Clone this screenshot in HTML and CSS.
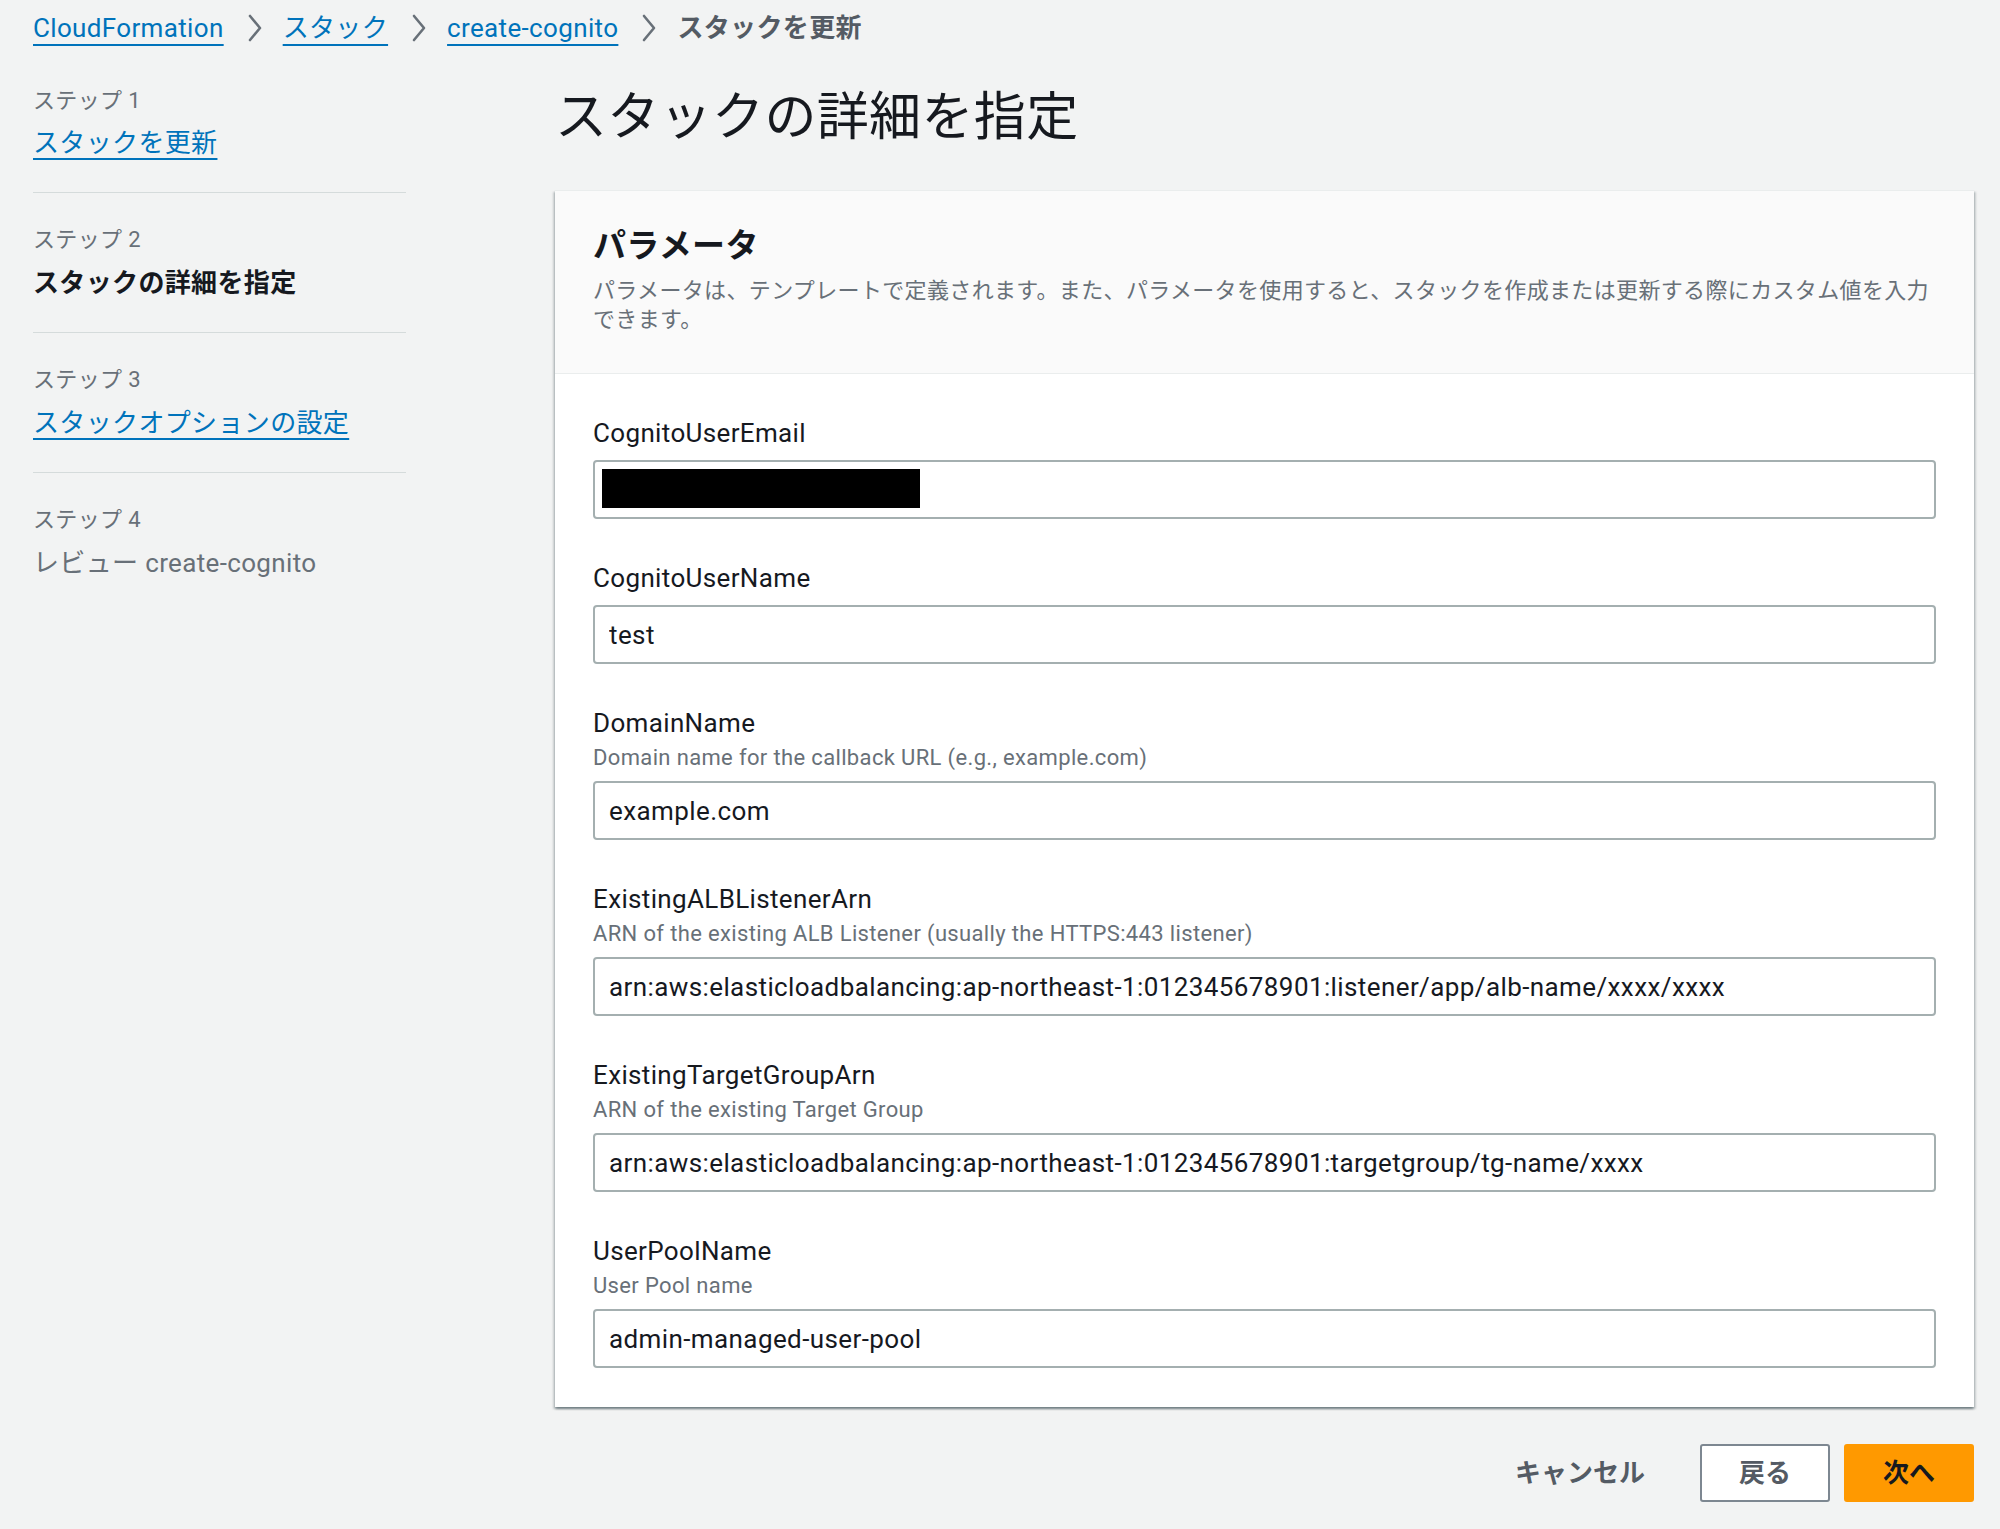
FILE: index.html
```html
<!DOCTYPE html>
<html lang="ja">
<head>
<meta charset="utf-8">
<title>スタックの詳細を指定</title>
<link rel="stylesheet" href="styles.css">
</head>
<body>
<nav class="breadcrumbs">
  <a class="crumb-link" href="#">CloudFormation</a>
  <svg class="chev" viewBox="0 0 18 30" aria-hidden="true"><polyline points="4,3 14,15 4,27"/></svg>
  <a class="crumb-link" href="#">スタック</a>
  <svg class="chev" viewBox="0 0 18 30" aria-hidden="true"><polyline points="4,3 14,15 4,27"/></svg>
  <a class="crumb-link" href="#">create-cognito</a>
  <svg class="chev" viewBox="0 0 18 30" aria-hidden="true"><polyline points="4,3 14,15 4,27"/></svg>
  <span class="crumb-current">スタックを更新</span>
</nav>

<div class="layout">
  <aside class="steps">
    <div class="step">
      <div class="step-num">ステップ 1</div>
      <a class="step-title link" href="#">スタックを更新</a>
    </div>
    <div class="step">
      <div class="step-num">ステップ 2</div>
      <span class="step-title current">スタックの詳細を指定</span>
    </div>
    <div class="step">
      <div class="step-num">ステップ 3</div>
      <a class="step-title link" href="#">スタックオプションの設定</a>
    </div>
    <div class="step">
      <div class="step-num">ステップ 4</div>
      <span class="step-title disabled">レビュー create-cognito</span>
    </div>
  </aside>

  <main class="content">
    <h1 class="page-title">スタックの詳細を指定</h1>

    <section class="panel">
      <header class="panel-header">
        <h2 class="panel-title">パラメータ</h2>
        <p class="panel-desc">パラメータは、テンプレートで定義されます。また、パラメータを使用すると、スタックを作成または更新する際にカスタム値を入力<br>できます。</p>
      </header>
      <div class="panel-body">
        <div class="field">
          <label class="field-label">CognitoUserEmail</label>
          <div class="input-wrap">
            <input class="input" type="text" value="" readonly>
            <span class="redact"></span>
          </div>
        </div>
        <div class="field">
          <label class="field-label">CognitoUserName</label>
          <div class="input-wrap">
            <input class="input" type="text" value="test" readonly>
          </div>
        </div>
        <div class="field">
          <label class="field-label">DomainName</label>
          <div class="field-desc">Domain name for the callback URL (e.g., example.com)</div>
          <div class="input-wrap">
            <input class="input" type="text" value="example.com" readonly>
          </div>
        </div>
        <div class="field">
          <label class="field-label">ExistingALBListenerArn</label>
          <div class="field-desc">ARN of the existing ALB Listener (usually the HTTPS:443 listener)</div>
          <div class="input-wrap">
            <input class="input" type="text" value="arn:aws:elasticloadbalancing:ap-northeast-1:012345678901:listener/app/alb-name/xxxx/xxxx" readonly>
          </div>
        </div>
        <div class="field">
          <label class="field-label">ExistingTargetGroupArn</label>
          <div class="field-desc">ARN of the existing Target Group</div>
          <div class="input-wrap">
            <input class="input" type="text" value="arn:aws:elasticloadbalancing:ap-northeast-1:012345678901:targetgroup/tg-name/xxxx" readonly>
          </div>
        </div>
        <div class="field">
          <label class="field-label">UserPoolName</label>
          <div class="field-desc">User Pool name</div>
          <div class="input-wrap">
            <input class="input" type="text" value="admin-managed-user-pool" readonly>
          </div>
        </div>
      </div>
    </section>

    <div class="actions">
      <button class="btn btn-cancel" type="button">キャンセル</button>
      <button class="btn btn-back" type="button">戻る</button>
      <button class="btn btn-primary" type="button">次へ</button>
    </div>
  </main>
</div>
</body>
</html>
```

FILE: styles.css
```css
html, body {
  margin: 0;
  padding: 0;
}

body {
  background: #f2f3f3;
  color: #16191f;
  font-family: Roboto, "Noto Sans CJK JP", sans-serif;
  font-size: 26px;
  letter-spacing: 0.35px;
}

a {
  color: #0073bb;
}

/* Breadcrumbs */
.breadcrumbs {
  display: flex;
  align-items: center;
  padding: 10px 33px 0;
  height: 36px;
  line-height: 36px;
  font-size: 26px;
}

.crumb-link {
  text-decoration: underline;
  text-decoration-thickness: 2px;
  text-underline-offset: 7px;
}

.chev {
  width: 18px;
  height: 30px;
  margin: 0 19px 0 22px;
  flex: none;
}

.chev polyline {
  fill: none;
  stroke: #687078;
  stroke-width: 2.6;
  stroke-linecap: round;
  stroke-linejoin: round;
}

.crumb-current {
  color: #545b64;
  font-weight: 700;
}

/* Layout */
.layout {
  display: grid;
  grid-template-columns: 373px 1fr;
  column-gap: 149px;
  padding: 40px 26px 40px 33px;
}

/* Steps nav */
.steps {
  display: flex;
  flex-direction: column;
}

.step {
  padding: 32px 0 31px;
  border-top: 1px solid #d5dbdb;
}

.step:first-child {
  padding-top: 0;
  padding-bottom: 31px;
  border-top: none;
}

.step-num {
  font-size: 22px;
  line-height: 30px;
  color: #687078;
  margin-bottom: 10px;
}

.step:first-child .step-num {
  margin-bottom: 9px;
}

.step-title {
  display: inline-block;
  font-size: 26px;
  line-height: 36px;
}

.step-title.link {
  text-decoration: underline;
  text-decoration-thickness: 2px;
  text-underline-offset: 6px;
}

.step-title.current {
  font-weight: 700;
  color: #16191f;
}

.step-title.disabled {
  color: #687078;
}

/* Content */
.page-title {
  margin: 0 0 40px;
  font-size: 52px;
  line-height: 64px;
  font-weight: 400;
  color: #16191f;
}

.panel {
  background: #fff;
  border-top: 1px solid #eaeded;
  box-shadow: 0 2px 2px 0 rgba(0, 28, 36, 0.35),
              2px 2px 2px 0 rgba(0, 28, 36, 0.15),
              -2px 2px 2px 0 rgba(0, 28, 36, 0.15);
}

.panel-header {
  background: #fafafa;
  padding: 33px 38px 39px;
  border-bottom: 1px solid #eaeded;
}

.panel-title {
  margin: 0 0 8px;
  font-size: 33px;
  line-height: 44px;
  font-weight: 700;
  color: #16191f;
}

.panel-desc {
  margin: 0;
  font-size: 22px;
  line-height: 29px;
  color: #687078;
  white-space: nowrap;
}

.panel-body {
  display: flex;
  flex-direction: column;
  gap: 40px;
  padding: 40px 38px 39px;
}

.field {
  display: flex;
  flex-direction: column;
}

.field-label {
  font-size: 26px;
  line-height: 38px;
  color: #16191f;
}

.field-desc {
  margin-top: 1px;
  font-size: 22px;
  line-height: 30px;
  color: #687078;
}

.input-wrap {
  position: relative;
  margin-top: 8px;
}

.input {
  display: block;
  width: 100%;
  height: 59px;
  box-sizing: border-box;
  margin: 0;
  padding: 0 14px;
  border: 2px solid #a4afb0;
  border-radius: 4px;
  background: #fff;
  color: #16191f;
  font-family: inherit;
  font-size: 26px;
  letter-spacing: 0.4px;
  outline: none;
}

.redact {
  position: absolute;
  left: 9px;
  top: 9px;
  width: 318px;
  height: 39px;
  background: #000;
}

/* Actions */
.actions {
  display: flex;
  justify-content: flex-end;
  align-items: center;
  gap: 14px;
  margin-top: 37px;
}

.btn {
  height: 58px;
  box-sizing: border-box;
  padding: 0 37px;
  border-radius: 3px;
  font-family: inherit;
  font-size: 26px;
  font-weight: 700;
  line-height: 1;
  cursor: pointer;
}

.btn-cancel {
  background: none;
  border: none;
  padding: 0;
  margin-right: 41px;
  color: #545b64;
}

.btn-back {
  background: #fff;
  border: 2px solid #7d8791;
  color: #545b64;
}

.btn-primary {
  background: #ff9900;
  border: 2px solid #ff9900;
  color: #16191f;
}
```
